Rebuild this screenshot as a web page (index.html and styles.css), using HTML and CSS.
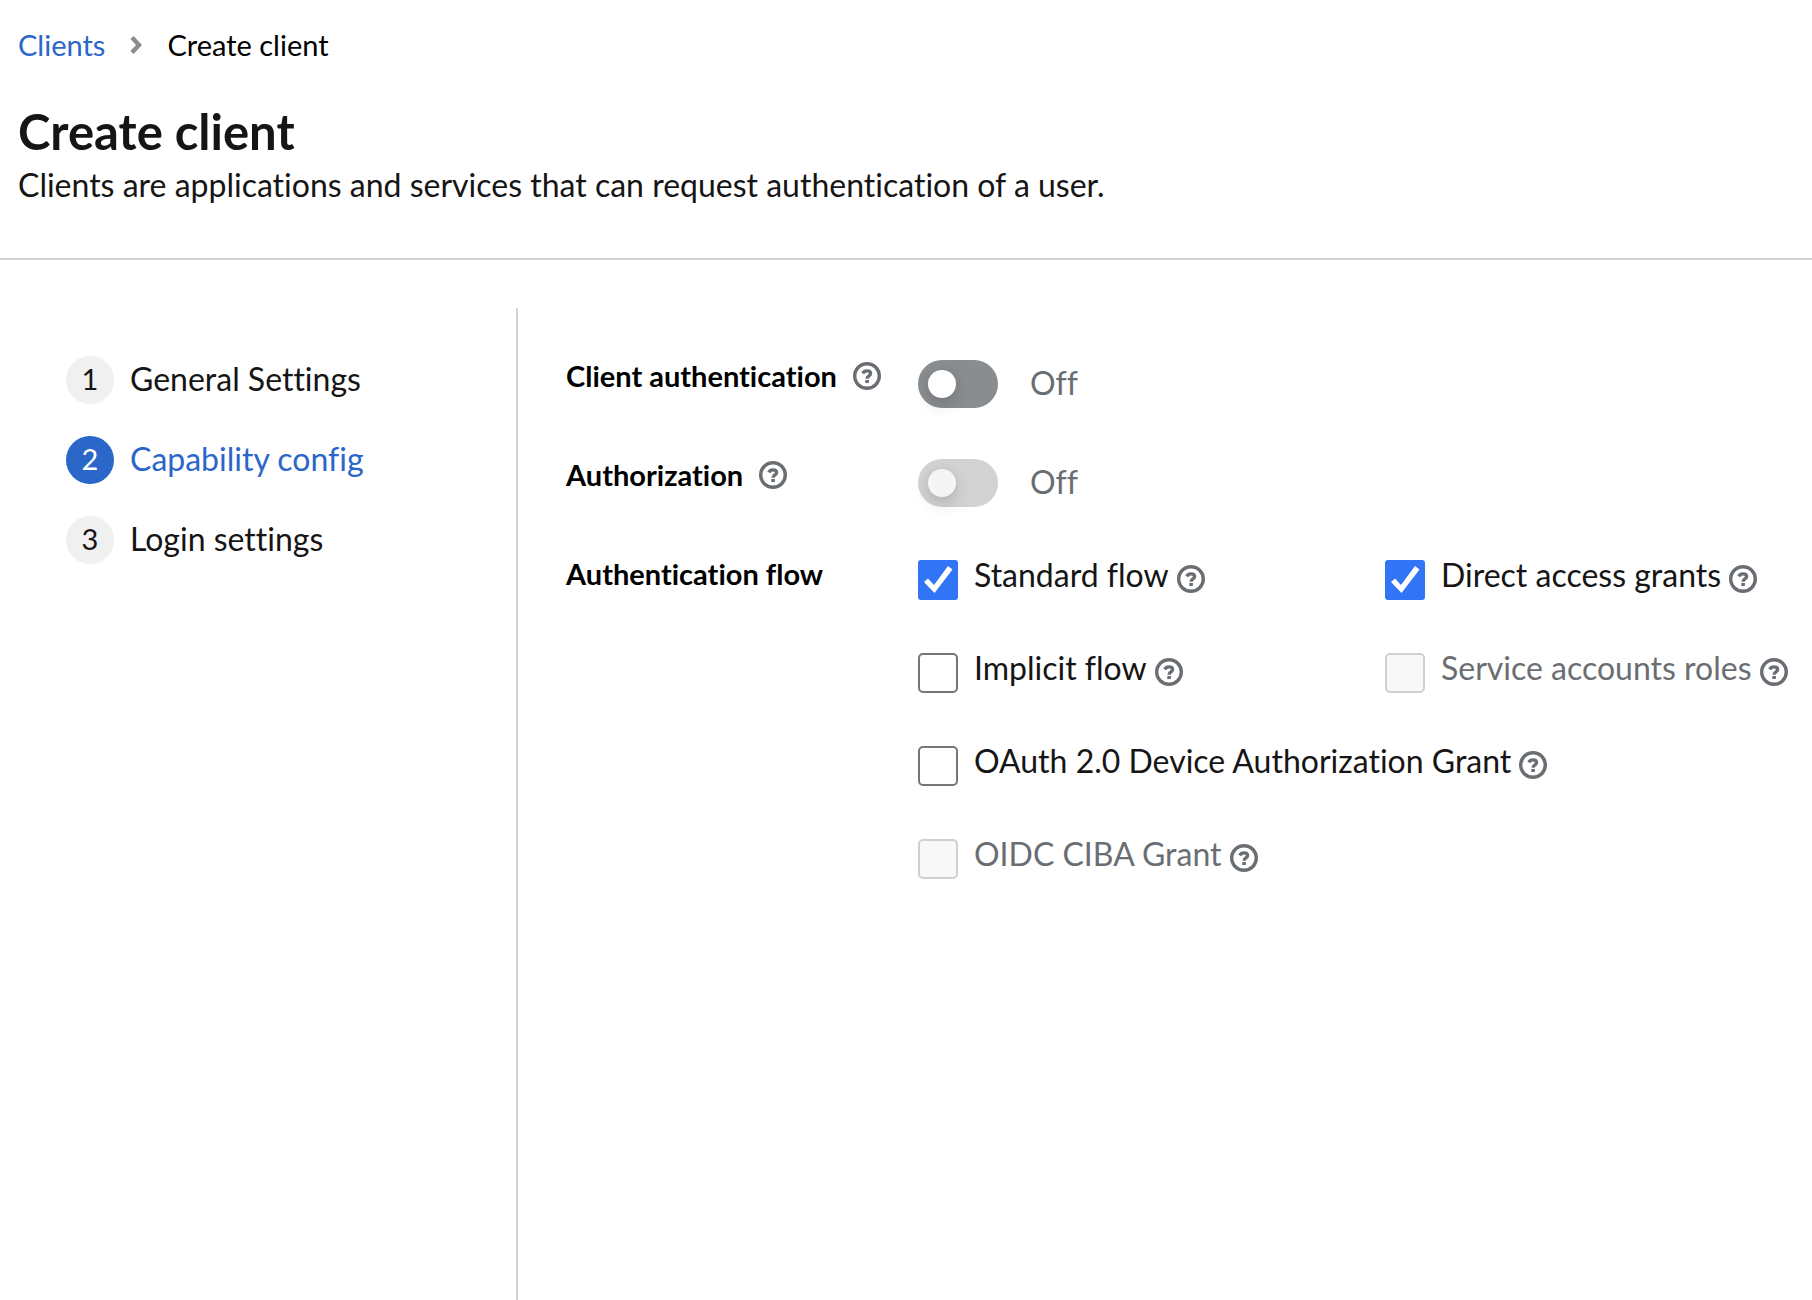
FILE: index.html
```html
<!DOCTYPE html>
<html lang="en">
<head>
    <meta charset="UTF-8">
    <meta name="viewport" content="width=device-width, initial-scale=1.0">
    <title>Create client</title>
    <link rel="stylesheet" href="styles.css">
</head>
<body>

<!-- Shared help icon -->
<svg class="sprite" aria-hidden="true">
    <symbol id="help" viewBox="0 0 28 28">
        <circle cx="14" cy="14" r="12.3" fill="none" stroke="currentColor" stroke-width="3.4"/>
        <path d="M9.7 11.4C10.6 9.7 12 8.9 13.9 8.9c2.3 0 3.7 1.1 3.7 2.7 0 2.4-3.5 2.3-3.5 5.2" fill="none" stroke="currentColor" stroke-width="3.4"/>
        <rect x="12.3" y="18" width="3.6" height="3" fill="currentColor"/>
    </symbol>
</svg>

<header class="header">
    <nav class="breadcrumb" aria-label="Breadcrumb">
        <a href="#">Clients</a>
        <svg class="chevron" viewBox="0 0 12 18" aria-hidden="true"><path d="M2 1.5L9 9l-7 7.5" fill="none" stroke="currentColor" stroke-width="4.4"/></svg>
        <span>Create client</span>
    </nav>
    <h1>Create client</h1>
    <p>Clients are applications and services that can request authentication of a user.</p>
</header>

<div class="wizard">
    <nav class="steps" aria-label="Steps">
        <ol>
            <li><a href="#"><span class="step-number">1</span>General Settings</a></li>
            <li><a href="#" class="current" aria-current="step"><span class="step-number">2</span>Capability config</a></li>
            <li><a href="#"><span class="step-number">3</span>Login settings</a></li>
        </ol>
    </nav>

    <main class="content">
        <form class="form">
            <div class="form-label">
                <label for="client-auth">Client authentication</label>
                <button type="button" class="help" aria-label="Help"><svg><use href="#help"/></svg></button>
            </div>
            <div class="switch">
                <input type="checkbox" role="switch" id="client-auth">
                <label for="client-auth">Off</label>
            </div>

            <div class="form-label">
                <label for="authorization">Authorization</label>
                <button type="button" class="help" aria-label="Help"><svg><use href="#help"/></svg></button>
            </div>
            <div class="switch">
                <input type="checkbox" role="switch" id="authorization" disabled>
                <label for="authorization">Off</label>
            </div>

            <div class="form-label" id="flow-label">Authentication flow</div>
            <div class="flows" role="group" aria-labelledby="flow-label">
                <div class="check">
                    <input type="checkbox" id="standard" checked>
                    <label for="standard">Standard flow</label>
                    <button type="button" class="help" aria-label="Help"><svg><use href="#help"/></svg></button>
                </div>
                <div class="check">
                    <input type="checkbox" id="direct" checked>
                    <label for="direct">Direct access grants</label>
                    <button type="button" class="help" aria-label="Help"><svg><use href="#help"/></svg></button>
                </div>
                <div class="check">
                    <input type="checkbox" id="implicit">
                    <label for="implicit">Implicit flow</label>
                    <button type="button" class="help" aria-label="Help"><svg><use href="#help"/></svg></button>
                </div>
                <div class="check">
                    <input type="checkbox" id="service" disabled>
                    <label for="service">Service accounts roles</label>
                    <button type="button" class="help" aria-label="Help"><svg><use href="#help"/></svg></button>
                </div>
                <div class="check wide">
                    <input type="checkbox" id="device">
                    <label for="device">OAuth 2.0 Device Authorization Grant</label>
                    <button type="button" class="help" aria-label="Help"><svg><use href="#help"/></svg></button>
                </div>
                <div class="check wide">
                    <input type="checkbox" id="ciba" disabled>
                    <label for="ciba">OIDC CIBA Grant</label>
                    <button type="button" class="help" aria-label="Help"><svg><use href="#help"/></svg></button>
                </div>
            </div>
        </form>
    </main>
</div>

</body>
</html>
```
FILE: styles.css
```css
* {
    box-sizing: border-box;
}
body {
    font-family: Lato, "Open Sans", sans-serif;
    font-size: 32px;
    line-height: 46px;
    font-variant-ligatures: none;
    color: #151515;
    background-color: #fff;
    margin: 0;
    min-height: 100vh;
    display: flex;
    flex-direction: column;
}
.sprite {
    display: none;
}
.header {
    padding: 24px 18px 50px;
    border-bottom: 2px solid #d2d2d2;
}
.breadcrumb {
    display: flex;
    align-items: center;
    font-size: 29px;
    line-height: 42px;
    margin-bottom: 34px;
    color: #000;
}
.breadcrumb a {
    color: #2b66c9;
    text-decoration: none;
}
.chevron {
    width: 12px;
    height: 18px;
    margin: 0 25px;
    color: #8a8d90;
}
h1 {
    font-size: 49px;
    font-weight: 700;
    line-height: 62px;
    margin: 0;
}
.header p {
    margin: 0;
}
.wizard {
    display: flex;
    flex: 1;
    margin-top: 48px;
}
.steps {
    flex: 0 0 518px;
    padding: 48px 66px;
    border-right: 2px solid #d2d2d2;
}
.steps ol {
    list-style: none;
    margin: 0;
    padding: 0;
    display: flex;
    flex-direction: column;
    gap: 32px;
}
.steps a {
    display: flex;
    gap: 16px;
    color: #151515;
    text-decoration: none;
}
.step-number {
    width: 48px;
    height: 48px;
    border-radius: 50%;
    background-color: #f0f0f0;
    font-size: 29px;
    text-align: center;
}
.steps .current {
    color: #2b66c9;
}
.current .step-number {
    background-color: #2b66c9;
    color: #fff;
}
.content {
    flex: 1;
    padding: 48px 0 48px 48px;
}
.form {
    display: grid;
    grid-template-columns: 352px 1fr;
    row-gap: 47px;
}
.form-label {
    display: flex;
    align-items: center;
    gap: 16px;
    height: 40px;
    font-size: 29px;
    font-weight: 700;
    line-height: 40px;
    color: #000;
}
.help {
    display: flex;
    padding: 0;
    border: none;
    background: none;
    color: #6a6e73;
    cursor: pointer;
}
.help svg {
    width: 28px;
    height: 28px;
}
.switch {
    display: flex;
    align-items: flex-start;
    gap: 32px;
    height: 52px;
    padding-top: 4px;
    color: #6a6e73;
}
.switch input {
    appearance: none;
    width: 80px;
    height: 48px;
    margin: 0;
    padding: 10px;
    border-radius: 24px;
    background-color: #8a8d90;
}
.switch input::before {
    content: "";
    display: block;
    width: 28px;
    height: 28px;
    border-radius: 50%;
    background-color: #fff;
    box-shadow: 0 8px 16px rgba(3, 3, 3, 0.12), 0 0 8px rgba(3, 3, 3, 0.06);
}
.switch input:disabled {
    background-color: #d2d2d2;
}
.switch input:disabled::before {
    background-color: #f5f5f5;
}
.flows {
    display: grid;
    grid-template-columns: 1fr 1fr;
    gap: 47px 40px;
}
.check {
    display: flex;
    align-items: flex-start;
    line-height: 42px;
    white-space: nowrap;
}
.check.wide {
    grid-column: 1 / -1;
}
.check input {
    appearance: none;
    flex: none;
    width: 40px;
    height: 40px;
    margin: 6px 16px 0 0;
    border: 2px solid #767676;
    border-radius: 5px;
    background-color: #fff;
}
.check input:checked {
    border: none;
    border-radius: 3px;
    background-color: #3174f6;
}
.check input:checked::before {
    content: "";
    display: block;
    width: 40px;
    height: 40px;
    background-color: #fff;
    clip-path: path("M6 22L10 18.5L16 25L30 6L34.5 9.5L16.5 33Z");
}
.check input:disabled {
    border-color: #d0d0d0;
    background-color: #f8f8f8;
}
.check input:disabled + label {
    color: #6a6e73;
}
.check .help {
    margin: 11px 0 0 8px;
}
```
